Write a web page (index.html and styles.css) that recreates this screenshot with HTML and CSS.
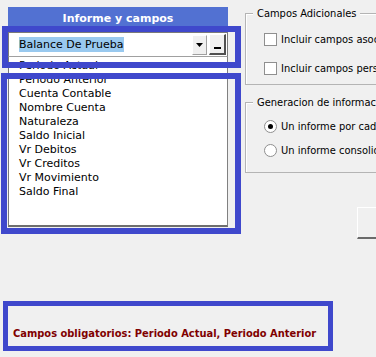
FILE: index.html
```html
<!DOCTYPE html>
<html lang="es">
<head>
    <meta charset="UTF-8">
    <meta name="viewport" content="width=device-width, initial-scale=1.0">
    <title>Informe y campos</title>
    <link rel="stylesheet" href="styles.css">
</head>
<body>
    <div class="main">
        <div class="left">
            <div class="header">Informe y campos</div>
            <div class="combo">
                <span class="combo-text"><span class="selected">Balance De Prueba</span></span>
                <span class="combo-arrow">
                    <svg width="7" height="4" viewBox="0 0 7 4"><path d="M0 0H7L3.5 4Z" fill="#000"/></svg>
                </span>
                <span class="combo-extra"><span class="dash"></span></span>
            </div>
            <ul class="fields">
                <li>Periodo Actual</li>
                <li>Periodo Anterior</li>
                <li>Cuenta Contable</li>
                <li>Nombre Cuenta</li>
                <li>Naturaleza</li>
                <li>Saldo Inicial</li>
                <li>Vr Debitos</li>
                <li>Vr Creditos</li>
                <li>Vr Movimiento</li>
                <li>Saldo Final</li>
            </ul>
        </div>
        <div class="right">
            <div class="group group-extra">
                <div class="group-title">Campos Adicionales</div>
                <label class="option"><span class="check"></span>Incluir campos asociados</label>
                <label class="option"><span class="check"></span>Incluir campos personalizados</label>
            </div>
            <div class="group group-gen">
                <div class="group-title">Generacion de informacion</div>
                <label class="option"><span class="radio on"></span>Un informe por cada</label>
                <label class="option"><span class="radio"></span>Un informe consolidado</label>
            </div>
            <div class="button"></div>
        </div>
    </div>
    <p class="note">Campos obligatorios: Periodo Actual, Periodo Anterior</p>

    <!-- marcas de anotacion -->
    <div class="mark mark-combo"></div>
    <div class="mark mark-list"></div>
    <div class="mark mark-note"></div>
</body>
</html>
```

FILE: styles.css
```css
body {
    margin: 0;
    width: 376px;
    height: 357px;
    overflow: hidden;
    background-color: #f0f0f0;
    font-family: "DejaVu Sans", sans-serif;
    font-size: 11px;
    color: #000;
    position: relative;
}
.main {
    display: flex;
    height: 230px;
    padding: 7px 0 0 8px;
}
.left {
    width: 220px;
    flex-shrink: 0;
}
.header {
    height: 25px;
    background-color: #5271d2;
    color: #fff;
    font-weight: bold;
    font-size: 11px;
    text-align: center;
    line-height: 24px;
}
.combo {
    display: flex;
    align-items: center;
    height: 23px;
    border: 1px solid #7a7a7a;
    border-bottom-color: #a0a0a0;
    background-color: #fff;
    padding-right: 1px;
}
.combo-text {
    flex: 1;
    padding-left: 10px;
}
.selected {
    background-color: #99c9ef;
    padding: 1px 0;
}
.combo-arrow {
    width: 15px;
    height: 20px;
    box-sizing: border-box;
    border: 1px solid #fff;
    border-right-color: #a0a0a0;
    border-bottom-color: #a0a0a0;
    background-color: #f0f0f0;
    display: flex;
    align-items: center;
    justify-content: center;
}
.combo-extra {
    width: 17px;
    height: 21px;
    margin-left: 2px;
    box-sizing: border-box;
    border: 1px solid #fff;
    border-right: 2px solid #505050;
    border-bottom: 2px solid #505050;
    background-color: #f0f0f0;
    display: flex;
    align-items: flex-end;
    justify-content: center;
    padding-bottom: 4px;
}
.dash {
    width: 7px;
    height: 2px;
    background-color: #000;
}
.fields {
    list-style: none;
    margin: 0;
    padding: 2px 0 0;
    height: 166px;
    border: 1px solid #7a7a7a;
    border-top: none;
    border-right-color: #808080;
    border-bottom: 2px solid #6e6e6e;
    background-color: #fff;
}
.fields li {
    height: 14px;
    line-height: 14px;
    padding-left: 10px;
}
.right {
    flex: 1;
    margin-left: 17px;
    padding-top: 6px;
    font-family: "DejaVu Sans Condensed", "DejaVu Sans", sans-serif;
    font-stretch: condensed;
    font-size: 11px;
}
.group {
    border: 1px solid #b4b4b4;
    border-right: none;
    box-shadow: inset 1px 1px #fff;
}
.group-extra {
    height: 70px;
}
.group-gen {
    height: 69px;
    margin-top: 17px;
}
.group-title {
    width: max-content;
    margin: -7px 0 0 7px;
    padding: 0 4px;
    background-color: #f0f0f0;
    line-height: 13px;
    white-space: nowrap;
}
.option {
    display: flex;
    align-items: center;
    white-space: nowrap;
    height: 13px;
    margin: 13px 0 0 18px;
}
.option + .option {
    margin-top: 16px;
}
.group-gen .option {
    margin-top: 11px;
}
.group-gen .option + .option {
    margin-top: 11px;
}
.check {
    width: 11px;
    height: 11px;
    border: 1px solid #8f8f8f;
    background-color: #fff;
    margin-right: 4px;
    flex-shrink: 0;
}
.radio {
    width: 11px;
    height: 11px;
    border: 1px solid #8f8f8f;
    border-radius: 50%;
    background-color: #fff;
    margin-right: 4px;
    flex-shrink: 0;
    position: relative;
}
.radio.on::after {
    content: "";
    position: absolute;
    left: 3px;
    top: 3px;
    width: 5px;
    height: 5px;
    border-radius: 50%;
    background-color: #000;
}
.button {
    width: 60px;
    height: 29px;
    margin: 34px 0 0 112px;
    border-top: 1px solid #fff;
    border-left: 1px solid #fff;
    border-bottom: 2px solid #6a6a6a;
    background-color: #f0f0f0;
}
.note {
    margin: 90px 0 0 13px;
    line-height: 14px;
    font-family: "DejaVu Sans Condensed", "DejaVu Sans", sans-serif;
    font-stretch: condensed;
    font-size: 11px;
    font-weight: bold;
    color: #800000;
    white-space: nowrap;
}
.mark {
    position: absolute;
    border: 6px solid #3f48cc;
    box-sizing: border-box;
}
.mark-combo {
    left: 2px;
    top: 26px;
    width: 239px;
    height: 42px;
}
.mark-list {
    left: 1px;
    top: 73px;
    width: 240px;
    height: 161px;
}
.mark-note {
    left: 3px;
    top: 301px;
    width: 330px;
    height: 50px;
    border-width: 5px;
}
```
